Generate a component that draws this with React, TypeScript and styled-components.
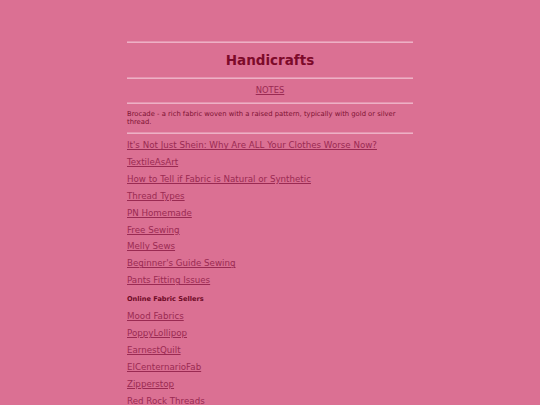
import React from "react";
import styled, { createGlobalStyle } from "styled-components";

const notesLinks = [
    "It's Not Just Shein: Why Are ALL Your Clothes Worse Now?",
    "TextileAsArt",
    "How to Tell if Fabric is Natural or Synthetic",
    "Thread Types",
    "PN Homemade",
    "Free Sewing",
    "Melly Sews",
    "Beginner's Guide Sewing",
    "Pants Fitting Issues",
];

const sellerLinks = [
    "Mood Fabrics",
    "PoppyLollipop",
    "EarnestQuilt",
    "ElCenternarioFab",
    "Zipperstop",
    "Red Rock Threads",
];

const GlobalStyle = createGlobalStyle`
    html, body {
        margin: 0;
        padding: 0;
        background: #db7093;
    }
    body {
        font-family: "DejaVu Sans", Verdana, sans-serif;
        color: #800020;
    }
`;

const Page = styled.main`
    width: 286px;
    margin: 0 auto;
    padding-top: 41px;
`;

const Rule = styled.hr`
    height: 0;
    margin: 0;
    border: none;
    border-top: 1px solid #e595b0;
    border-bottom: 1px solid #eeb0c5;
`;

const Title = styled.h1`
    margin: 0;
    font-size: 13.5px;
    line-height: 34px;
    font-weight: bold;
    text-align: center;
    color: #7d0a2a;
`;

const Nav = styled.div`
    text-align: center;
    line-height: 23px;
    font-size: 8.4px;
`;

const Link = styled.a`
    color: #9a2a52;
    text-decoration: underline;
`;

const Definition = styled.p`
    margin: 0;
    padding: 6px 0 6px;
    font-size: 6.8px;
    line-height: 8px;
    color: #7d1232;
`;

const LinkList = styled.ul<{ $gap?: number }>`
    list-style: none;
    margin: ${props => props.$gap ?? 0}px 0 0;
    padding: 0;
`;

const LinkItem = styled.li`
    height: 16.85px;
    line-height: 16.85px;
    font-size: 8.7px;
    white-space: nowrap;
`;

const SectionHeading = styled.h4`
    margin: 3.6px 0 0;
    font-size: 6.6px;
    line-height: 12px;
    font-weight: bold;
    color: #6e0a26;
`;

export default function App() {
    return (
        <>
            <GlobalStyle />
            <Page>
                <Rule />
                <Title>Handicrafts</Title>
                <Rule />
                <Nav>
                    <Link href="#">NOTES</Link>
                </Nav>
                <Rule />
                <Definition>
                    Brocade - a rich fabric woven with a raised pattern, typically with gold or silver thread.
                </Definition>
                <Rule />
                <LinkList $gap={3.4}>
                    {notesLinks.map(text => (
                        <LinkItem key={text}>
                            <Link href="#">{text}</Link>
                        </LinkItem>
                    ))}
                </LinkList>
                <SectionHeading>Online Fabric Sellers</SectionHeading>
                <LinkList $gap={3.8}>
                    {sellerLinks.map(text => (
                        <LinkItem key={text}>
                            <Link href="#">{text}</Link>
                        </LinkItem>
                    ))}
                </LinkList>
            </Page>
        </>
    );
}
